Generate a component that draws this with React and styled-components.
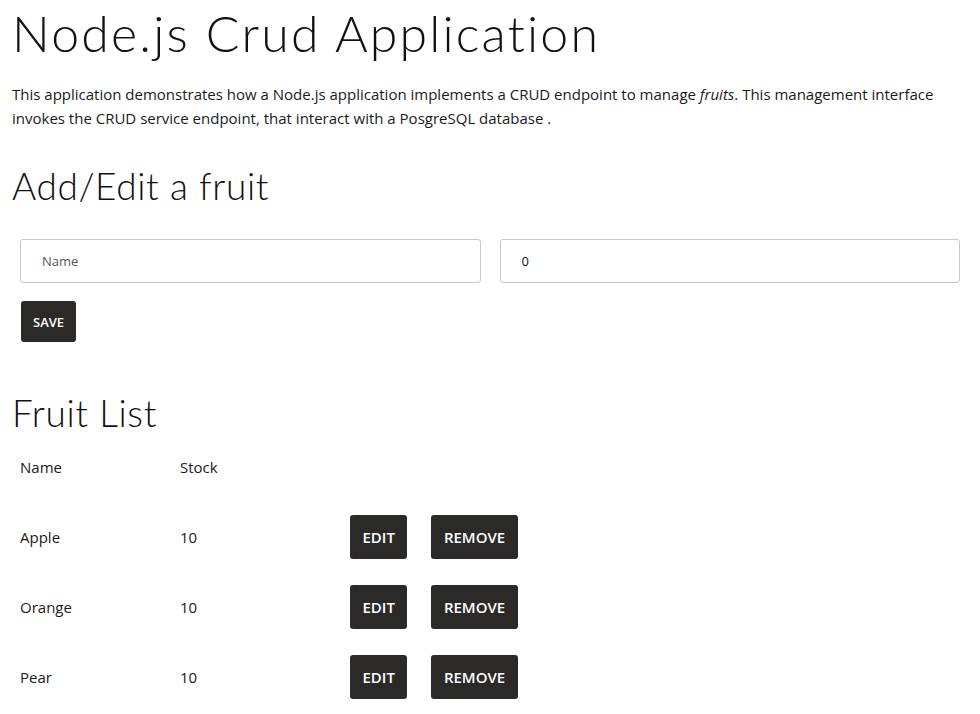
import React from 'react';
import styled, { createGlobalStyle } from 'styled-components';

const GlobalStyle = createGlobalStyle`
  body {
    margin: 0;
    background: #fff;
    color: #1a1a1a;
    font-family: "Open Sans", "Liberation Sans", sans-serif;
  }
`;

const Page = styled.div`
  padding: 0 12px;
`;

const Title = styled.h1`
  font-family: "Lato", "DejaVu Sans", sans-serif;
  font-weight: 300;
  font-size: 50px;
  letter-spacing: 2.2px;
  line-height: 1;
  margin: 8px 0 24px;
  color: #111;
`;

const Heading = styled.h2`
  font-family: "Lato", "DejaVu Sans", sans-serif;
  font-weight: 300;
  font-size: 37px;
  letter-spacing: 0.6px;
  line-height: 1;
  margin: ${({ top }) => top || '52px'} 0 0;
  color: #111;
`;

const Intro = styled.p`
  font-size: 15px;
  line-height: 24px;
  margin: 0;
  color: #1a1a1a;
`;

const Form = styled.div`
  padding: 35px 8px 0;
`;

const Fields = styled.div`
  display: grid;
  grid-template-columns: 1fr 1fr;
  gap: 19px;
`;

const Input = styled.input`
  height: 44px;
  box-sizing: border-box;
  border: 1px solid #c8c8c8;
  border-radius: 3px;
  padding: 0 21px;
  font-family: "Open Sans", "Liberation Sans", sans-serif;
  font-size: 13px;
  color: #111;
  &::placeholder {
    color: #555;
  }
`;

const Button = styled.button`
  background: #2b2a29;
  color: #fff;
  border: none;
  border-radius: 3px;
  font-family: "Open Sans", "Liberation Sans", sans-serif;
  font-weight: 600;
  font-size: ${({ small }) => (small ? '13px' : '15px')};
  height: ${({ small }) => (small ? '41px' : '44px')};
  padding: 0 ${({ small }) => (small ? '12px' : '12.5px')};
  cursor: pointer;
`;

const SaveRow = styled.div`
  margin-top: 18px;
  padding-left: 1px;
`;

const Table = styled.div`
  margin-top: 1px;
  padding-left: 8px;
`;

const Row = styled.div`
  display: grid;
  grid-template-columns: 160px 170px auto;
  align-items: center;
  height: 70px;
  font-size: 15px;
`;

const Actions = styled.div`
  display: flex;
  gap: 24px;
`;

const fruits = [
  { name: 'Apple', stock: 10 },
  { name: 'Orange', stock: 10 },
  { name: 'Pear', stock: 10 },
];

export default function App() {
  return (
    <>
      <GlobalStyle />
      <Page>
        <Title>Node.js Crud Application</Title>
        <Intro>
          This application demonstrates how a Node.js application implements a CRUD endpoint to manage{' '}
          <em>fruits</em>. This management interface invokes the CRUD service endpoint, that interact with a
          PosgreSQL database .
        </Intro>
        <Heading top="37px">Add/Edit a fruit</Heading>
        <Form>
          <Fields>
            <Input placeholder="Name" />
            <Input defaultValue="0" />
          </Fields>
          <SaveRow>
            <Button small>SAVE</Button>
          </SaveRow>
        </Form>
        <Heading>Fruit List</Heading>
        <Table>
          <Row>
            <span>Name</span>
            <span>Stock</span>
            <span />
          </Row>
          {fruits.map((f) => (
            <Row key={f.name}>
              <span>{f.name}</span>
              <span>{f.stock}</span>
              <Actions>
                <Button>EDIT</Button>
                <Button>REMOVE</Button>
              </Actions>
            </Row>
          ))}
        </Table>
      </Page>
    </>
  );
}
